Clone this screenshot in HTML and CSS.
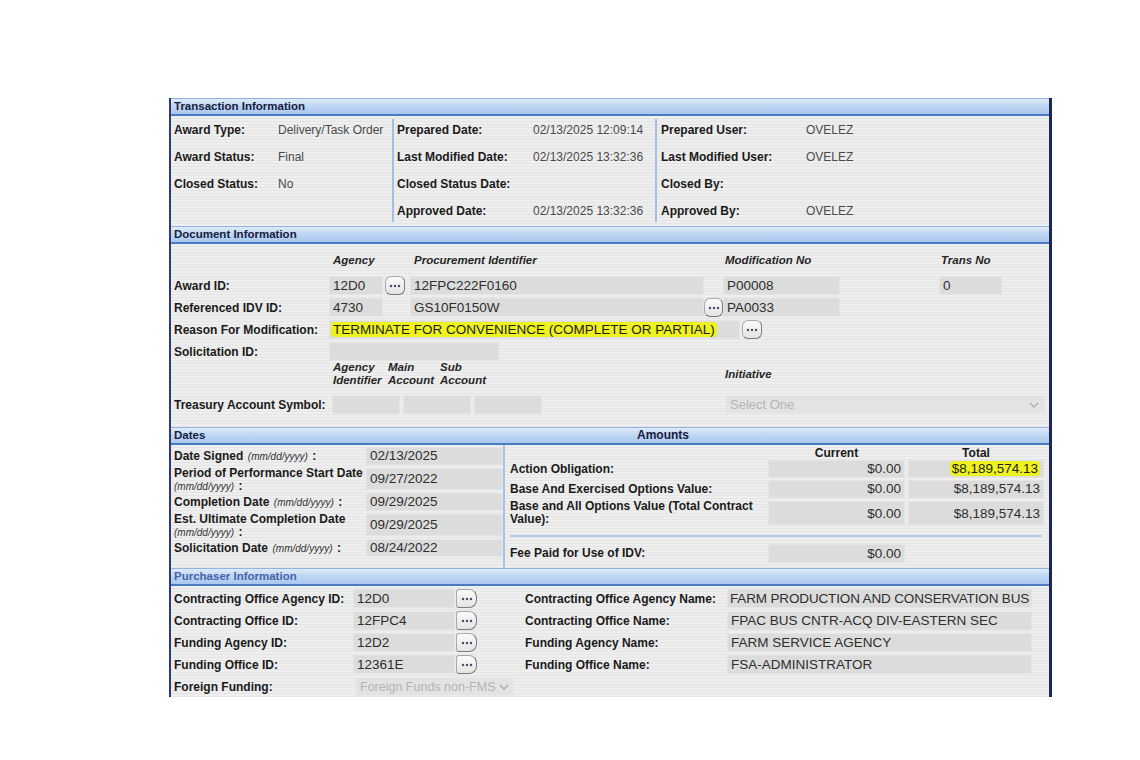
FILE: index.html
```html
<!DOCTYPE html>
<html>
<head>
<meta charset="utf-8">
<title>Transaction</title>
<link rel="stylesheet" href="styles.css">
</head>
<body>
<div class="panel">

  <div class="sec-head">Transaction Information</div>
  <div class="sec-body trans">
    <div class="tcol c1">
      <div class="trow"><span class="lbl">Award Type:</span><span class="val">Delivery/Task Order</span></div>
      <div class="trow"><span class="lbl">Award Status:</span><span class="val">Final</span></div>
      <div class="trow"><span class="lbl">Closed Status:</span><span class="val">No</span></div>
      <div class="trow"></div>
    </div>
    <div class="vdiv"></div>
    <div class="tcol c2">
      <div class="trow"><span class="lbl">Prepared Date:</span><span class="val">02/13/2025 12:09:14</span></div>
      <div class="trow"><span class="lbl">Last Modified Date:</span><span class="val">02/13/2025 13:32:36</span></div>
      <div class="trow"><span class="lbl">Closed Status Date:</span><span class="val"></span></div>
      <div class="trow"><span class="lbl">Approved Date:</span><span class="val">02/13/2025 13:32:36</span></div>
    </div>
    <div class="vdiv"></div>
    <div class="tcol c3">
      <div class="trow"><span class="lbl">Prepared User:</span><span class="val">OVELEZ</span></div>
      <div class="trow"><span class="lbl">Last Modified User:</span><span class="val">OVELEZ</span></div>
      <div class="trow"><span class="lbl">Closed By:</span><span class="val"></span></div>
      <div class="trow"><span class="lbl">Approved By:</span><span class="val">OVELEZ</span></div>
    </div>
  </div>

  <div class="sec-head">Document Information</div>
  <div class="sec-body doc">
    <div class="drow colhead">
      <span class="dlbl"></span>
      <span class="ch ch-agency">Agency</span>
      <span class="ch ch-proc">Procurement Identifier</span>
      <span class="ch ch-mod">Modification No</span>
      <span class="ch ch-trans">Trans No</span>
    </div>
    <div class="drow first">
      <span class="dlbl">Award ID:</span>
      <span class="box w54">12D0</span>
      <span class="btn ml2"><svg width="12" height="4" viewBox="0 0 12 4"><circle cx="2" cy="2" r="1.2"/><circle cx="6" cy="2" r="1.2"/><circle cx="10" cy="2" r="1.2"/></svg></span>
      <span class="box w294 ml5">12FPC222F0160</span>
      <span class="box w117 ml19">P00008</span>
      <span class="box w63 ml99">0</span>
    </div>
    <div class="drow">
      <span class="dlbl">Referenced IDV ID:</span>
      <span class="box w54">4730</span>
      <span class="box w294 ml27">GS10F0150W</span>
      <span class="btn w19"><svg width="12" height="4" viewBox="0 0 12 4"><circle cx="2" cy="2" r="1.2"/><circle cx="6" cy="2" r="1.2"/><circle cx="10" cy="2" r="1.2"/></svg></span>
      <span class="box w117">PA0033</span>
    </div>
    <div class="drow">
      <span class="dlbl">Reason For Modification:</span>
      <span class="box w411"><span class="hl">TERMINATE FOR CONVENIENCE (COMPLETE OR PARTIAL)</span></span>
      <span class="btn ml2"><svg width="12" height="4" viewBox="0 0 12 4"><circle cx="2" cy="2" r="1.2"/><circle cx="6" cy="2" r="1.2"/><circle cx="10" cy="2" r="1.2"/></svg></span>
    </div>
    <div class="drow">
      <span class="dlbl">Solicitation ID:</span>
      <span class="box w170"></span>
    </div>
    <div class="subhead">
      <span class="dlbl"></span>
      <span class="sh sh1">Agency<br>Identifier</span>
      <span class="sh sh2">Main<br>Account</span>
      <span class="sh sh3">Sub<br>Account</span>
      <span class="sh sh4">Initiative</span>
    </div>
    <div class="drow tas">
      <span class="dlbl">Treasury Account Symbol:</span>
      <span class="box w68 ml3"></span>
      <span class="box w68 ml3"></span>
      <span class="box w68 ml3"></span>
      <span class="sel w321 ml183">Select One<svg class="chev" width="10" height="6" viewBox="0 0 10 6"><path d="M1 1 L5 5 L9 1" fill="none" stroke="#b0b0b0" stroke-width="1.3"/></svg></span>
    </div>
  </div>

  <div class="sec-head split">
    <span class="dates-title">Dates</span>
    <span class="amt-title">Amounts</span>
  </div>
  <div class="sec-body dates-body">
    <div class="dates-left">
      <div class="dl"><span><b>Date Signed</b> <i>(mm/dd/yyyy)</i> <b>:</b></span></div>
      <div class="box dbox">02/13/2025</div>
      <div class="dl tall"><span><b>Period of Performance Start Date</b><br><i>(mm/dd/yyyy)</i> <b>:</b></span></div>
      <div class="box dbox tallbox">09/27/2022</div>
      <div class="dl"><span><b>Completion Date</b> <i>(mm/dd/yyyy)</i> <b>:</b></span></div>
      <div class="box dbox">09/29/2025</div>
      <div class="dl tall"><span><b>Est. Ultimate Completion Date</b><br><i>(mm/dd/yyyy)</i> <b>:</b></span></div>
      <div class="box dbox tallbox">09/29/2025</div>
      <div class="dl"><span><b>Solicitation Date</b> <i>(mm/dd/yyyy)</i> <b>:</b></span></div>
      <div class="box dbox">08/24/2022</div>
    </div>
    <div class="amounts">
      <div class="arow ahead">
        <span class="albl"></span>
        <span class="acol">Current</span>
        <span class="acol tot">Total</span>
      </div>
      <div class="arow r1">
        <span class="albl">Action Obligation:</span>
        <span class="box abox">$0.00</span>
        <span class="box abox tot"><span class="hl">$8,189,574.13</span></span>
      </div>
      <div class="arow">
        <span class="albl">Base And Exercised Options Value:</span>
        <span class="box abox">$0.00</span>
        <span class="box abox tot">$8,189,574.13</span>
      </div>
      <div class="arow tallrow">
        <span class="albl">Base and All Options Value (Total Contract Value):</span>
        <span class="box abox">$0.00</span>
        <span class="box abox tot">$8,189,574.13</span>
      </div>
      <div class="hsep"></div>
      <div class="arow fee">
        <span class="albl">Fee Paid for Use of IDV:</span>
        <span class="box abox">$0.00</span>
      </div>
    </div>
  </div>

  <div class="sec-head purch">Purchaser Information</div>
  <div class="sec-body purch-body">
    <div class="prow">
      <span class="plbl">Contracting Office Agency ID:</span>
      <span class="box w102">12D0</span>
      <span class="btn pbtn"><svg width="12" height="4" viewBox="0 0 12 4"><circle cx="2" cy="2" r="1.2"/><circle cx="6" cy="2" r="1.2"/><circle cx="10" cy="2" r="1.2"/></svg></span>
      <span class="plbl2">Contracting Office Agency Name:</span>
      <span class="box w305 tight">FARM PRODUCTION AND CONSERVATION BUS</span>
    </div>
    <div class="prow">
      <span class="plbl">Contracting Office ID:</span>
      <span class="box w102">12FPC4</span>
      <span class="btn pbtn"><svg width="12" height="4" viewBox="0 0 12 4"><circle cx="2" cy="2" r="1.2"/><circle cx="6" cy="2" r="1.2"/><circle cx="10" cy="2" r="1.2"/></svg></span>
      <span class="plbl2">Contracting Office Name:</span>
      <span class="box w305">FPAC BUS CNTR-ACQ DIV-EASTERN SEC</span>
    </div>
    <div class="prow">
      <span class="plbl">Funding Agency ID:</span>
      <span class="box w102">12D2</span>
      <span class="btn pbtn"><svg width="12" height="4" viewBox="0 0 12 4"><circle cx="2" cy="2" r="1.2"/><circle cx="6" cy="2" r="1.2"/><circle cx="10" cy="2" r="1.2"/></svg></span>
      <span class="plbl2">Funding Agency Name:</span>
      <span class="box w305">FARM SERVICE AGENCY</span>
    </div>
    <div class="prow">
      <span class="plbl">Funding Office ID:</span>
      <span class="box w102">12361E</span>
      <span class="btn pbtn"><svg width="12" height="4" viewBox="0 0 12 4"><circle cx="2" cy="2" r="1.2"/><circle cx="6" cy="2" r="1.2"/><circle cx="10" cy="2" r="1.2"/></svg></span>
      <span class="plbl2">Funding Office Name:</span>
      <span class="box w305">FSA-ADMINISTRATOR</span>
    </div>
    <div class="prow">
      <span class="plbl">Foreign Funding:</span>
      <span class="sel w159">Foreign Funds non-FMS<svg class="chev" width="10" height="6" viewBox="0 0 10 6"><path d="M1 1 L5 5 L9 1" fill="none" stroke="#a8a8a8" stroke-width="1.3"/></svg></span>
    </div>
  </div>

</div>
</body>
</html>
```

FILE: styles.css
```css
* { box-sizing: border-box; }

html, body {
  margin: 0;
  padding: 0;
  background: #ffffff;
}

body {
  font-family: "Liberation Sans", Arial, sans-serif;
  color: #1b1b1b;
}

.panel {
  margin: 98px 0 0 169px;
  width: 883px;
  border-left: 2px solid #2e3a78;
  border-right: 3px solid #1d2655;
}

/* Section headers */
.sec-head {
  height: 18px;
  border-top: 1px solid #8fb4e4;
  border-bottom: 2px solid #4a7cc2;
  background: linear-gradient(to bottom, #dfeaf9 0%, #c0d7f3 45%, #a9c7ee 100%);
  font-size: 11.5px;
  font-weight: bold;
  line-height: 15px;
  color: #16203f;
  padding-left: 3px;
}

.sec-head.split {
  display: flex;
  padding-left: 0;
}

.dates-title {
  width: 332px;
  padding-left: 3px;
}

.amt-title {
  width: 320px;
  text-align: center;
  font-size: 12px;
}

.sec-head.purch {
  color: #4565a6;
}

/* Section bodies: faint striped grey */
.sec-body {
  background: repeating-linear-gradient(to bottom, #eeeeee 0, #eeeeee 2px, #e5e5e5 2px, #e5e5e5 3px);
}

.lbl, .dlbl, .plbl, .plbl2, .albl, .dl b {
  font-weight: bold;
  font-size: 12px;
  color: #1a1a1a;
}

/* Transaction */
.trans {
  display: flex;
  height: 110px;
}

.tcol {
  display: flex;
  flex-direction: column;
}

.c1 { width: 221px; padding-left: 3px; }
.c2 { width: 261px; padding-left: 3px; }
.c3 { flex: 1; padding-left: 4px; }

.vdiv {
  width: 2px;
  margin: 3px 0 4px;
  background: #a3c0e4;
}

.trow {
  height: 27px;
  display: flex;
  align-items: center;
}

.c1 .lbl { width: 104px; }
.c2 .lbl { width: 136px; }
.c3 .lbl { width: 145px; }

.val {
  font-size: 12px;
  color: #4a4a4a;
}

/* Inputs */
.box {
  display: block;
  height: 19px;
  background: #dcdcdc;
  border: 1px solid #e4e4e4;
  font-size: 13.5px;
  line-height: 17px;
  color: #2e2e2e;
  padding-left: 3px;
  white-space: nowrap;
  overflow: hidden;
  flex: none;
}

.box.tight {
  letter-spacing: -0.15px;
  padding-left: 2px;
}

.sel {
  display: flex;
  align-items: center;
  justify-content: space-between;
  height: 19px;
  background: #e3e3e3;
  border: 1px solid #e9e9e9;
  font-size: 13px;
  color: #b4b4b4;
  padding: 0 6px 0 4px;
  white-space: nowrap;
  flex: none;
}

.chev { flex: none; }

.btn {
  display: flex;
  align-items: center;
  justify-content: center;
  width: 20px;
  height: 19px;
  flex: none;
  background: linear-gradient(to bottom, #fbfbfb, #e4e4e4);
  border: 1px solid #a9a9a9;
  border-right-color: #7a7a7a;
  border-bottom-color: #7a7a7a;
  border-radius: 6px;
}

.btn svg { fill: #3f4d6d; }

.hl {
  background: #eef21e;
  color: #1e1e10;
  border-radius: 4px;
  padding: 0 2px;
  margin-left: -2px;
}

/* widths and spacings */
.w19 { width: 19px; }
.w54 { width: 54px; }
.w63 { width: 63px; }
.w68 { width: 68px; }
.w102 { width: 102px; }
.w117 { width: 117px; }
.w159 { width: 159px; }
.w170 { width: 170px; }
.w294 { width: 294px; }
.w305 { width: 305px; }
.w321 { width: 321px; }
.w411 { width: 411px; }

.ml2 { margin-left: 2px; }
.ml3 { margin-left: 3px; }
.ml5 { margin-left: 5px; }
.ml19 { margin-left: 19px; }
.ml27 { margin-left: 27px; }
.ml99 { margin-left: 99px; }
.ml183 { margin-left: 183px; }

/* Document */
.doc {
  padding: 7px 0 0 3px;
  height: 183px;
}

.drow {
  display: flex;
  align-items: center;
  height: 19px;
  margin-top: 3px;
}

.drow.colhead {
  height: 18px;
  margin-top: 0;
}

.drow.first { margin-top: 7px; }

.dlbl {
  width: 155px;
  flex: none;
  white-space: nowrap;
}

.ch, .sh {
  font-size: 11.5px;
  font-weight: bold;
  font-style: italic;
  color: #262626;
  white-space: nowrap;
  flex: none;
}

.ch-agency { width: 81px; padding-left: 4px; }
.ch-proc { width: 313px; padding-left: 4px; }
.ch-mod { width: 216px; padding-left: 2px; }
.ch-trans { padding-left: 2px; }

.subhead {
  display: flex;
  align-items: center;
  height: 26px;
  line-height: 13px;
}

.sh1 { width: 55px; margin-left: 4px; }
.sh2 { width: 52px; }
.sh3 { width: 285px; }

.drow.tas { margin-top: 8px; }

/* Dates / Amounts */
.dates-body {
  display: flex;
  height: 123px;
}

.dates-left {
  width: 332px;
  padding: 2px 0 0 3px;
  display: grid;
  grid-template-columns: 192px 137px;
  grid-auto-rows: min-content;
  row-gap: 2px;
}

.dl {
  display: flex;
  align-items: center;
  line-height: 12px;
  height: 18px;
}

.dl.tall { height: 24px; }

.dl i {
  font-size: 10px;
  color: #333;
}

.dbox { height: 18px; line-height: 16px; }
.dbox.tallbox { height: 22px; line-height: 20px; margin-top: 1px; }

.amounts {
  flex: 1;
  border-left: 2px solid #a6c2e6;
  padding: 2px 5px 0 5px;
}

.arow {
  display: flex;
  align-items: center;
  margin-top: 2px;
}

.albl {
  width: 258px;
  flex: none;
  line-height: 13px;
  padding-right: 8px;
}

.ahead {
  margin-top: 0;
  height: 12px;
  font-size: 12px;
  font-weight: bold;
  color: #1a1a1a;
}

.acol {
  width: 137px;
  text-align: center;
}

.acol.tot {
  width: 136px;
  margin-left: 3px;
}

.arow.r1 { margin-top: 1px; }

.abox {
  width: 137px;
  height: 18px;
  line-height: 16px;
  text-align: right;
  padding-right: 3px;
}

.abox.tot {
  width: 136px;
  margin-left: 3px;
}

.tallrow .abox {
  height: 24px;
  line-height: 24px;
}

.hsep {
  height: 2px;
  background: #b2cbea;
  margin: 9px 2px 7px 0;
}

.fee .abox { height: 19px; line-height: 17px; }

/* Purchaser */
.purch-body {
  height: 111px;
  padding: 3px 0 0 3px;
}

.prow {
  display: flex;
  align-items: center;
  height: 19px;
  margin-bottom: 3px;
}

.plbl {
  width: 179px;
  flex: none;
  white-space: nowrap;
}

.pbtn {
  width: 21px;
  margin-left: 1px;
  border-radius: 3px 8px 8px 3px;
}

.plbl2 {
  width: 202px;
  margin-left: 48px;
  flex: none;
  white-space: nowrap;
}

.w159 {
  margin-left: 2px;
  font-size: 12.5px;
  padding-right: 4px;
}
```
